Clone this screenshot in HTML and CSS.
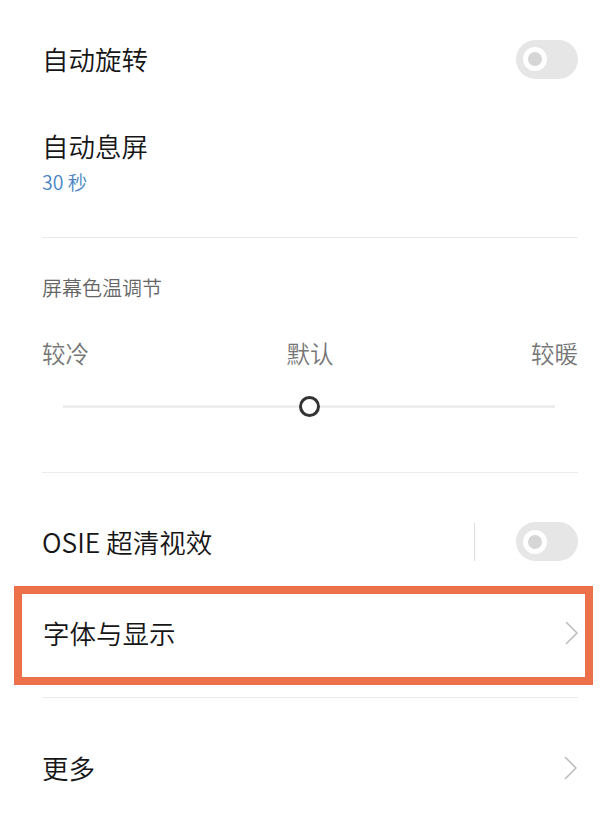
FILE: index.html
```html
<!DOCTYPE html>
<html lang="zh-CN">
<head>
<meta charset="utf-8">
<title>显示设置</title>
<link rel="stylesheet" href="styles.css">
</head>
<body>
<div class="page">
  <div class="row row-rotate">
    <span class="title">自动旋转</span>
    <div class="toggle"><div class="knob"></div></div>
  </div>

  <div class="block block-sleep">
    <div class="title">自动息屏</div>
    <div class="sub">30 秒</div>
  </div>

  <div class="block block-temp">
    <div class="section-label">屏幕色温调节</div>
    <div class="temp-labels">
      <span>较冷</span>
      <span>默认</span>
      <span>较暖</span>
    </div>
    <div class="slider">
      <div class="track"></div>
      <div class="thumb"></div>
      <div class="track"></div>
    </div>
  </div>

  <div class="row row-osie">
    <span class="title">OSIE 超清视效</span>
    <div class="osie-right">
      <div class="vsep"></div>
      <div class="toggle"><div class="knob"></div></div>
    </div>
  </div>

  <div class="row row-font highlight">
    <span class="title">字体与显示</span>
    <svg class="chev" width="14" height="24" viewBox="0 0 14 24"><polyline points="1.5,1.5 12,12 1.5,22.5" fill="none" stroke="#bdbdbd" stroke-width="1.6" stroke-linejoin="round" stroke-linecap="round"/></svg>
  </div>

  <div class="divider-wrap"><div class="divider"></div></div>

  <div class="row row-more">
    <span class="title">更多</span>
    <svg class="chev" width="14" height="24" viewBox="0 0 14 24"><polyline points="1.5,1.5 12,12 1.5,22.5" fill="none" stroke="#bdbdbd" stroke-width="1.6" stroke-linejoin="round" stroke-linecap="round"/></svg>
  </div>
</div>
</body>
</html>
```

FILE: styles.css
```css
html, body {
  margin: 0;
  padding: 0;
  background: #ffffff;
}

body {
  font-family: "Noto Sans CJK SC", "Noto Sans", sans-serif;
  font-weight: 350;
  color: #1c1c1c;
}

.page {
  width: 600px;
  height: 817px;
  overflow: hidden;
}

.row {
  display: flex;
  align-items: center;
  justify-content: space-between;
  padding: 0 22px 0 42px;
}

.title {
  font-size: 26.5px;
  line-height: 32px;
  color: #161616;
}

.row-rotate {
  height: 118px;
}

.toggle {
  width: 62px;
  height: 39px;
  border-radius: 20px;
  background: #e6e6e6;
  display: flex;
  align-items: center;
  padding-left: 7px;
  box-sizing: border-box;
}

.knob {
  width: 24px;
  height: 24px;
  border-radius: 50%;
  border: 5px solid #ffffff;
  background: #d6d6d6;
  box-sizing: border-box;
}

.block {
  margin: 0 22px 0 42px;
  border-bottom: 1px solid #ebebeb;
}

.block-sleep {
  padding: 12px 0 43px;
}

.block-sleep .sub {
  margin-top: 8px;
  font-size: 19.5px;
  line-height: 24px;
  color: #4a84c4;
}

.block-temp {
  padding-top: 37px;
  padding-bottom: 55px;
}

.section-label {
  font-size: 20px;
  line-height: 26px;
  color: #666666;
}

.temp-labels {
  margin-top: 37px;
  display: flex;
  justify-content: space-between;
  font-size: 23.5px;
  line-height: 30px;
  color: #767676;
}

.slider {
  margin: 27px 23px 0 21px;
  height: 22px;
  display: flex;
  align-items: center;
}

.track {
  flex: 1;
  height: 3px;
  background: #eeeeee;
}

.thumb {
  width: 21px;
  height: 21px;
  border-radius: 50%;
  border: 3.5px solid #333333;
  background: #ffffff;
  box-sizing: border-box;
}

.row-osie {
  padding-top: 49px;
  padding-bottom: 25px;
}

.osie-right {
  display: flex;
  align-items: center;
  gap: 41px;
}

.vsep {
  width: 1px;
  height: 38px;
  background: #dddddd;
}

.highlight {
  margin: 0 7px 0 14px;
  height: 99px;
  border: 8px solid #ec7049;
  box-sizing: border-box;
  padding: 0 6px 6px 21px;
}

.chev {
  display: block;
}

.divider-wrap {
  padding: 12px 22px 0 42px;
}

.divider {
  height: 1px;
  background: #ebebeb;
}

.row-more {
  height: 140px;
}
```
